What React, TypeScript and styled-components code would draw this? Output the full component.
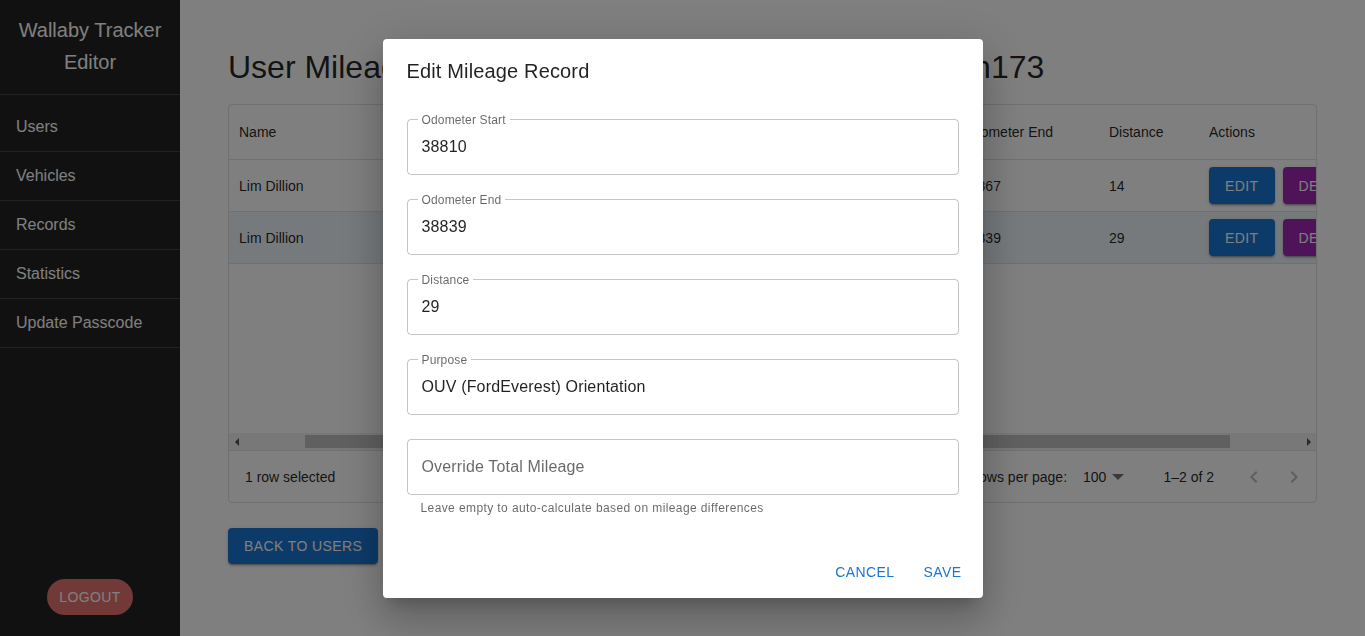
import React from 'react';
import styled, { createGlobalStyle } from 'styled-components';

const GlobalStyle = createGlobalStyle`
  html, body { margin: 0; padding: 0; height: 100%; }
  body {
    font-family: "Liberation Sans", Arial, sans-serif;
    background: #fff;
    overflow: hidden;
  }
  #root { height: 100%; }
  * { box-sizing: border-box; }
`;

const Layout = styled.div`
  display: flex;
  height: 100vh;
`;

const Sidebar = styled.aside`
  width: 180px;
  flex-shrink: 0;
  background: #222;
  color: #fff;
  display: flex;
  flex-direction: column;
`;

const Brand = styled.div`
  padding: 14px 8px 16px;
  text-align: center;
  font-size: 20px;
  line-height: 32px;
  border-bottom: 1px solid #444;
`;

const Nav = styled.nav`
  display: flex;
  flex-direction: column;
  padding-top: 8px;
`;

const NavItem = styled.a`
  display: flex;
  align-items: center;
  height: 49px;
  padding: 0 16px;
  font-size: 16px;
  color: #fff;
  text-decoration: none;
  border-bottom: 1px solid #444;
`;

const LogoutButton = styled.button`
  margin: auto auto 21px;
  height: 36px;
  padding: 0 12px;
  border: 0;
  border-radius: 18px;
  background: #e57373;
  color: #fff;
  font-family: inherit;
  font-size: 14px;
  letter-spacing: 0.4px;
  text-transform: uppercase;
`;

const Main = styled.main`
  flex: 1;
  min-width: 0;
  padding: 49px 48px 0;
`;

const Title = styled.h1`
  margin: 0 0 18px;
  font-size: 32px;
  line-height: 37px;
  font-weight: 400;
  white-space: nowrap;
  color: rgba(0, 0, 0, 0.87);
`;

const Grid = styled.div`
  height: 399px;
  border: 1px solid #e0e0e0;
  border-radius: 4px;
  display: flex;
  flex-direction: column;
  overflow: hidden;
  color: rgba(0, 0, 0, 0.87);
  font-size: 14px;
`;

const Viewport = styled.div`
  flex: 1;
  display: flex;
  flex-direction: column;
  overflow: hidden;
`;

const Row = styled.div<{ $header?: boolean; $selected?: boolean }>`
  display: flex;
  flex-shrink: 0;
  height: ${p => (p.$header ? '55px' : '52px')};
  border-bottom: 1px solid #e0e0e0;
  background: ${p => (p.$selected ? 'rgba(25, 118, 210, 0.08)' : 'transparent')};
`;

const Cell = styled.div<{ $w: number }>`
  flex: 0 0 ${p => p.$w}px;
  display: flex;
  align-items: center;
  gap: 8px;
  padding: 0 10px;
  white-space: nowrap;
  overflow: hidden;
`;

const Filler = styled.div`
  flex: 1;
`;

const ScrollTrack = styled.div`
  height: 17px;
  flex-shrink: 0;
  background: #f1f1f1;
  display: flex;
  align-items: center;
`;

const ScrollArrow = styled.div<{ $dir: 'left' | 'right' }>`
  width: 15px;
  height: 17px;
  display: flex;
  align-items: center;
  justify-content: center;
  &::before {
    content: '';
    border-top: 4px solid transparent;
    border-bottom: 4px solid transparent;
    ${p => (p.$dir === 'left' ? 'border-right: 4px solid #505050;' : 'border-left: 4px solid #505050;')}
  }
`;

const ThumbArea = styled.div`
  flex: 1;
  padding-left: 61px;
`;

const Thumb = styled.div`
  width: 925px;
  height: 13px;
  background: #c1c1c1;
`;

const Footer = styled.div`
  height: 52px;
  flex-shrink: 0;
  border-top: 1px solid #e0e0e0;
  display: flex;
  align-items: center;
  justify-content: space-between;
  padding: 0 2px 0 16px;
`;

const Pagination = styled.div`
  display: flex;
  align-items: center;
`;

const PageSelect = styled.div`
  display: flex;
  align-items: center;
  margin: 0 39px 0 16px;
  svg { margin-left: 6px; }
`;

const PageActions = styled.div`
  display: flex;
  margin-left: 20px;
`;

const IconButton = styled.button`
  width: 40px;
  height: 40px;
  padding: 8px;
  border: 0;
  background: none;
  display: flex;
  align-items: center;
  justify-content: center;
`;

const ContainedButton = styled.button<{ $color: string }>`
  height: 37px;
  padding: 0 16px;
  border: 0;
  border-radius: 4px;
  background: ${p => p.$color};
  color: #fff;
  font-family: inherit;
  font-size: 14px;
  letter-spacing: 0.4px;
  text-transform: uppercase;
  white-space: nowrap;
  box-shadow: 0 3px 1px -2px rgba(0, 0, 0, 0.2), 0 2px 2px 0 rgba(0, 0, 0, 0.14), 0 1px 5px 0 rgba(0, 0, 0, 0.12);
`;

const BackButton = styled(ContainedButton)`
  margin-top: 25px;
  height: 36px;
`;

const Backdrop = styled.div`
  position: fixed;
  inset: 0;
  background: rgba(0, 0, 0, 0.5);
  display: flex;
  align-items: center;
  justify-content: center;
`;

const Dialog = styled.div`
  width: 600px;
  background: #fff;
  border-radius: 4px;
  color: rgba(0, 0, 0, 0.87);
  box-shadow: 0 11px 15px -7px rgba(0, 0, 0, 0.2), 0 24px 38px 3px rgba(0, 0, 0, 0.14), 0 9px 46px 8px rgba(0, 0, 0, 0.12);
`;

const DialogTitle = styled.h2`
  margin: 0;
  padding: 16px 24px;
  font-size: 20px;
  line-height: 32px;
  font-weight: 400;
  letter-spacing: 0.15px;
`;

const DialogContent = styled.div`
  display: flex;
  flex-direction: column;
  padding: 0 24px 20px;
`;

const Field = styled.div`
  margin: 16px 0 8px;
`;

const FieldBox = styled.div<{ $empty?: boolean }>`
  position: relative;
  height: 56px;
  padding: 0 14px;
  border: 1px solid rgba(0, 0, 0, 0.23);
  border-radius: 4px;
  display: flex;
  align-items: center;
  font-size: 16px;
  letter-spacing: 0.15px;
  color: ${p => (p.$empty ? 'rgba(0, 0, 0, 0.6)' : 'rgba(0, 0, 0, 0.87)')};
`;

const FloatLabel = styled.span`
  position: absolute;
  top: -8px;
  left: 10px;
  padding: 0 4px;
  background: #fff;
  font-size: 12px;
  line-height: 16px;
  letter-spacing: 0.15px;
  color: rgba(0, 0, 0, 0.6);
`;

const Helper = styled.p`
  margin: 3px 14px 0;
  font-size: 12px;
  line-height: 20px;
  letter-spacing: 0.4px;
  color: rgba(0, 0, 0, 0.6);
`;

const DialogActions = styled.div`
  display: flex;
  justify-content: flex-end;
  gap: 8px;
  padding: 8px;
`;

const TextButton = styled.button`
  min-width: 64px;
  padding: 6px 8px;
  border: 0;
  background: none;
  font-family: inherit;
  font-size: 14px;
  font-weight: 400;
  line-height: 24px;
  letter-spacing: 0.4px;
  text-transform: uppercase;
  color: #1976d2;
`;

const columns = [
  { key: 'name', label: 'Name', w: 150 },
  { key: 'date', label: 'Date', w: 120 },
  { key: 'vehicle', label: 'Vehicle', w: 150 },
  { key: 'purpose', label: 'Purpose', w: 191 },
  { key: 'start', label: 'Odometer Start', w: 112 },
  { key: 'end', label: 'Odometer End', w: 147 },
  { key: 'distance', label: 'Distance', w: 100 },
];

const rows = [
  { id: 1, name: 'Lim Dillion', date: '2024-05-10', vehicle: 'Ford Everest', purpose: 'Site Visit', start: '38853', end: '38867', distance: '14' },
  { id: 2, name: 'Lim Dillion', date: '2024-05-11', vehicle: 'Ford Everest', purpose: 'Orientation', start: '38810', end: '38839', distance: '29' },
];

const fields = [
  { label: 'Odometer Start', value: '38810' },
  { label: 'Odometer End', value: '38839' },
  { label: 'Distance', value: '29' },
  { label: 'Purpose', value: 'OUV (FordEverest) Orientation' },
];

const Chevron = ({ dir }: { dir: 'left' | 'right' }) => (
  <svg width="24" height="24" viewBox="0 0 24 24" fill="rgba(0,0,0,0.26)">
    <path d={dir === 'left' ? 'M15.41 16.59 10.83 12l4.58-4.59L14 6l-6 6 6 6z' : 'M8.59 16.59 13.17 12 8.59 7.41 10 6l6 6-6 6z'} />
  </svg>
);

export default function App() {
  return (
    <>
      <GlobalStyle />
      <Layout>
        <Sidebar>
          <Brand>Wallaby Tracker Editor</Brand>
          <Nav>
            {['Users', 'Vehicles', 'Records', 'Statistics', 'Update Passcode'].map(item => (
              <NavItem key={item}>{item}</NavItem>
            ))}
          </Nav>
          <LogoutButton>Logout</LogoutButton>
        </Sidebar>
        <Main>
          <Title>User Mileage Records for Lim Dillion - User ID: ldillion173</Title>
          <Grid>
            <Viewport>
              <Row $header>
                {columns.map(c => (
                  <Cell key={c.key} $w={c.w}>{c.label}</Cell>
                ))}
                <Cell $w={200}>Actions</Cell>
              </Row>
              {rows.map(r => (
                <Row key={r.id} $selected={r.id === 2}>
                  {columns.map(c => (
                    <Cell key={c.key} $w={c.w}>{(r as Record<string, any>)[c.key]}</Cell>
                  ))}
                  <Cell $w={200}>
                    <ContainedButton $color="#1976d2">Edit</ContainedButton>
                    <ContainedButton $color="#9c27b0">Delete</ContainedButton>
                  </Cell>
                </Row>
              ))}
              <Filler />
              <ScrollTrack>
                <ScrollArrow $dir="left" />
                <ThumbArea>
                  <Thumb />
                </ThumbArea>
                <ScrollArrow $dir="right" />
              </ScrollTrack>
            </Viewport>
            <Footer>
              <span>1 row selected</span>
              <Pagination>
                <span>Rows per page:</span>
                <PageSelect>
                  100
                  <svg width="12" height="6" viewBox="0 0 10 5" fill="rgba(0,0,0,0.54)">
                    <path d="M0 0l5 5 5-5z" />
                  </svg>
                </PageSelect>
                <span>1–2 of 2</span>
                <PageActions>
                  <IconButton><Chevron dir="left" /></IconButton>
                  <IconButton><Chevron dir="right" /></IconButton>
                </PageActions>
              </Pagination>
            </Footer>
          </Grid>
          <BackButton $color="#1976d2">Back to Users</BackButton>
        </Main>
      </Layout>
      <Backdrop>
        <Dialog>
          <DialogTitle>Edit Mileage Record</DialogTitle>
          <DialogContent>
            {fields.map(f => (
              <Field key={f.label}>
                <FieldBox>
                  <FloatLabel>{f.label}</FloatLabel>
                  {f.value}
                </FieldBox>
              </Field>
            ))}
            <Field>
              <FieldBox $empty>Override Total Mileage</FieldBox>
              <Helper>Leave empty to auto-calculate based on mileage differences</Helper>
            </Field>
          </DialogContent>
          <DialogActions>
            <TextButton>Cancel</TextButton>
            <TextButton>Save</TextButton>
          </DialogActions>
        </Dialog>
      </Backdrop>
    </>
  );
}
